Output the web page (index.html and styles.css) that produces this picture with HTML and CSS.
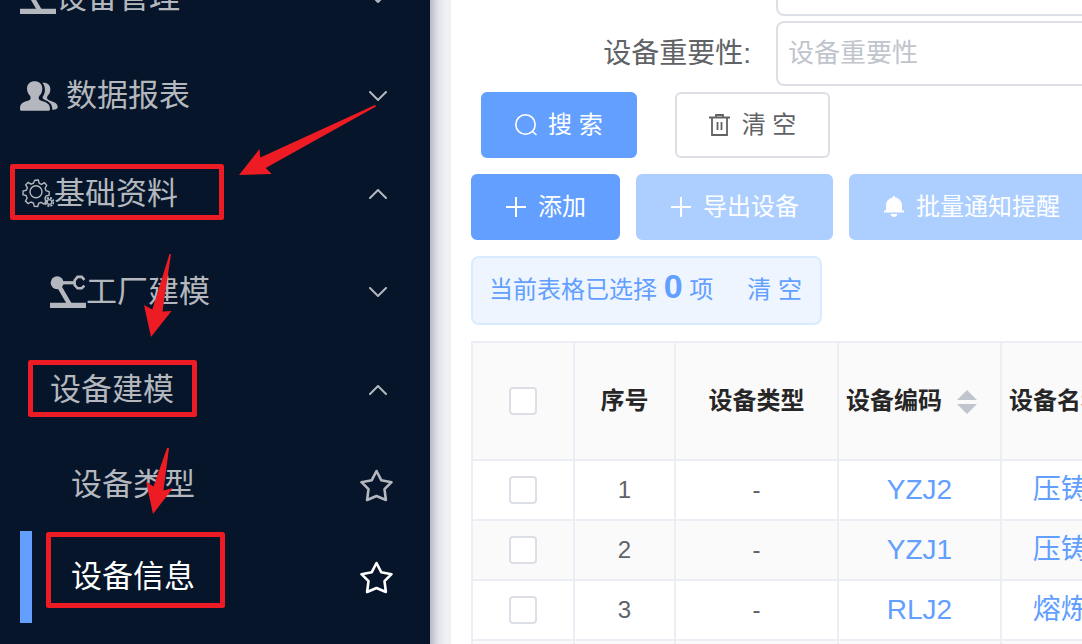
FILE: index.html
```html
<!DOCTYPE html>
<html lang="zh-CN">
<head>
    <meta charset="UTF-8">
    <meta name="viewport" content="width=device-width, initial-scale=1.0">
    <title>设备信息</title>
    <link rel="stylesheet" href="styles.css">
</head>
<body>
    <!-- 公用图标 -->
    <svg class="sprite" aria-hidden="true">
        <symbol id="robot" viewBox="0 0 111 101">
            <circle cx="22" cy="22" r="20" fill="currentColor"/>
            <path d="M0 84h111v16H0z" fill="currentColor"/>
            <path d="M30 36l30 52" fill="none" stroke="currentColor" stroke-width="14"/>
            <path d="M38 22h38" fill="none" stroke="currentColor" stroke-width="10"/>
            <path d="M106 13l-8-9H85l-9 11v14l9 10h13l8-8" fill="none" stroke="currentColor" stroke-width="8"/>
        </symbol>
        <symbol id="down" viewBox="0 0 18 10">
            <path d="M1 1l8 8 8-8" fill="none" stroke="currentColor" stroke-width="2" stroke-linecap="round"/>
        </symbol>
        <symbol id="up" viewBox="0 0 18 10">
            <path d="M1 9l8-8 8 8" fill="none" stroke="currentColor" stroke-width="2" stroke-linecap="round"/>
        </symbol>
        <symbol id="star" viewBox="0 0 33 33">
            <path d="M16.500 2l4.700 9.200 10.300 2-7 7 1.400 10.800-9.400-4-9.400 4 1.400-10.800-7-7 10.300-2z" fill="none" stroke="currentColor" stroke-width="2.600" stroke-linejoin="round"/>
        </symbol>
        <symbol id="plus" viewBox="0 0 24 24">
            <path d="M11 2v20M1 12h20" fill="none" stroke="currentColor" stroke-width="2"/>
        </symbol>
    </svg>

    <nav class="sidebar">
        <ul class="menu">
            <li><button class="menu-item"><svg class="menu-icon"><use href="#robot"/></svg>设备管理<svg class="chevron"><use href="#down"/></svg></button></li>
            <li>
                <button class="menu-item">
                    <svg class="menu-icon users" viewBox="0 0 114 89" fill="currentColor">
                        <path d="M0 84C0 68 6 64 24 59c8-3 10-7 6-15-6-6-9-14-9-22C21 8 31 0 44 0s23 8 23 22c0 9-3 17-9 22-4 8-2 12 6 15 18 5 26 11 26 25 0 3-3 5-6 5H6c-3 0-6-2-6-5z"/>
                        <path d="M67 5c13-2 24 5 24 19 0 9-3 15-8 20-4 8-1 11 6 14 17 6 24 10 24 20 0 4-3 6-16 8 0-16-7-24-25-31-6-4-5-7-2-11 6-8 8-28-3-39z"/>
                    </svg>数据报表<svg class="chevron"><use href="#down"/></svg>
                </button>
            </li>
            <li>
                <button class="menu-item">
                    <svg class="menu-icon gear" viewBox="-3 1 34 34" fill="none" stroke="currentColor">
                        <path d="M11.800 4.300l3.500-.3.900 3.300 2.300 1.100 2.900-1.700 2.300 2.600-1.600 2.900 1 2.500 3.100 1-.1 3.600-3.100.8-1.100 2.500 1.500 3-2.500 2.400-2.800-1.700-2.400 1-1 3.200-3.400-.1-.9-3.300-2.300-1.100-2.900 1.600L2.500 25l1.600-2.900-1-2.500L0 18.700l.1-3.600 3.200-.9 1.100-2.400-1.700-3 2.500-2.400L8 8.100l2.400-1z" stroke-width="1.400"/>
                        <circle cx="13" cy="15.800" r="6" stroke-width="1.400"/>
                        <circle cx="26.500" cy="26" r="4" stroke-width="2" stroke-dasharray="2 1.140"/>
                        <circle cx="26.500" cy="26" r="2.300" stroke-width="1.200"/>
                    </svg>基础资料<svg class="chevron"><use href="#up"/></svg>
                </button>
                <ul class="submenu">
                    <li><button class="menu-item level-2"><svg class="menu-icon"><use href="#robot"/></svg>工厂建模<svg class="chevron"><use href="#down"/></svg></button></li>
                    <li>
                        <button class="menu-item level-2">设备建模<svg class="chevron"><use href="#up"/></svg></button>
                        <ul class="submenu">
                            <li><a href="#" class="menu-link">设备类型<svg class="star"><use href="#star"/></svg></a></li>
                            <li><a href="#" class="menu-link active">设备信息<svg class="star"><use href="#star"/></svg></a></li>
                        </ul>
                    </li>
                </ul>
            </li>
        </ul>
    </nav>

    <main class="page">
        <div class="content">
            <form class="search-form">
                <div class="form-item">
                    <label for="level"></label>
                    <input type="text" id="level">
                </div>
                <div class="form-item">
                    <label for="importance">设备重要性:</label>
                    <input type="text" id="importance" placeholder="设备重要性">
                </div>
            </form>

            <div class="search-actions">
                <button class="btn primary">
                    <svg class="btn-icon" viewBox="0 0 24 24" fill="none" stroke="currentColor" stroke-width="1.600"><circle cx="10.500" cy="11.500" r="9.700"/><path d="M17 18l4.500 4"/></svg>
                    搜 索
                </button>
                <button class="btn">
                    <svg class="btn-icon" viewBox="0 0 24 24" fill="none" stroke="currentColor" stroke-width="1.800"><path d="M0 4.500h21M3 4.500V22h15V4.500M7 4.500V2h7v2.500M8.500 9v8M12.500 9v8"/></svg>
                    清 空
                </button>
            </div>

            <div class="toolbar">
                <button class="btn primary"><svg class="btn-icon"><use href="#plus"/></svg>添加</button>
                <button class="btn primary" disabled><svg class="btn-icon"><use href="#plus"/></svg>导出设备</button>
                <button class="btn primary" disabled>
                    <svg class="btn-icon" viewBox="1 0 24 24" fill="currentColor"><path d="M11 2.500V1h2v1.500c4.300.5 7 4 7 8v5h2v2H2v-2h2v-5c0-4 2.700-7.500 7-8zM8.500 19h7c-.4 1.900-1.700 3-3.500 3s-3.100-1.100-3.500-3z"/></svg>
                    批量通知提醒
                </button>
            </div>

            <div class="selection">
                <span>当前表格已选择 <b>0</b> 项</span>
                <button class="clear">清 空</button>
            </div>

            <table class="devices">
                <colgroup>
                    <col class="col-check">
                    <col class="col-index">
                    <col class="col-data">
                    <col class="col-data">
                    <col class="col-data">
                </colgroup>
                <thead>
                    <tr>
                        <th><input type="checkbox" aria-label="全选"></th>
                        <th>序号</th>
                        <th>设备类型</th>
                        <th class="sortable">设备编码<svg class="sort" viewBox="0 0 22 26"><path d="M1 11L11 1l10 10zM1 15h20L11 25z"/></svg></th>
                        <th class="sortable">设备名称<svg class="sort" viewBox="0 0 22 26"><path d="M1 11L11 1l10 10zM1 15h20L11 25z"/></svg></th>
                    </tr>
                </thead>
                <tbody>
                    <tr>
                        <td><input type="checkbox" aria-label="选择 1"></td>
                        <td>1</td>
                        <td>-</td>
                        <td><a href="#">YZJ2</a></td>
                        <td><a href="#">压铸机2</a></td>
                    </tr>
                    <tr>
                        <td><input type="checkbox" aria-label="选择 2"></td>
                        <td>2</td>
                        <td>-</td>
                        <td><a href="#">YZJ1</a></td>
                        <td><a href="#">压铸机1</a></td>
                    </tr>
                    <tr>
                        <td><input type="checkbox" aria-label="选择 3"></td>
                        <td>3</td>
                        <td>-</td>
                        <td><a href="#">RLJ2</a></td>
                        <td><a href="#">熔炼机2</a></td>
                    </tr>
                    <tr>
                        <td></td>
                        <td></td>
                        <td></td>
                        <td></td>
                        <td></td>
                    </tr>
                </tbody>
            </table>
        </div>
    </main>

    <!-- 操作指引标注 -->
    <svg class="guide" width="430" height="644" viewBox="0 0 430 644" aria-hidden="true">
        <g fill="none" stroke="#ed1c24" stroke-width="5" stroke-linejoin="round">
            <rect x="12.500" y="166.500" width="209" height="51"/>
            <rect x="30.500" y="362.500" width="164" height="52"/>
            <rect x="48.500" y="534.500" width="174" height="71"/>
        </g>
        <g fill="#ed1c24">
            <path d="M239 175l20.500-26 .8 8.500L375 105l1 1.500L265.700 168l6 6z"/>
            <path d="M169.500 254h1.500l-8.500 57.500 9-.5L151 337l-7-32 8.300 4.500z"/>
            <path d="M167 448h2l-5.500 42.500 9.500-2.500-20 26-7-32.500 7.500 5z"/>
        </g>
    </svg>
</body>
</html>
```
FILE: styles.css
```css
* {
    box-sizing: border-box;
}
body {
    font-family: "Liberation Sans", "Noto Sans CJK SC", sans-serif;
    font-size: 24px;
    line-height: 1.2;
    color: #606266;
    margin: 0;
    height: 100vh;
    display: flex;
    overflow: hidden;
    position: relative;
}
button, input {
    font-family: inherit;
    font-size: inherit;
    line-height: inherit;
    color: inherit;
}
button {
    cursor: pointer;
}
ul {
    list-style-type: none;
    margin: 0;
    padding: 0;
}
a {
    text-decoration: none;
}
.sprite {
    display: none;
}

/* 左侧菜单 */
.sidebar {
    background-color: #061529;
    color: #b4b8be;
    width: 430px;
    flex-shrink: 0;
    overflow: hidden;
}
.menu {
    margin-top: -51px;
}
.menu-item, .menu-link {
    display: flex;
    align-items: center;
    width: 100%;
    font-size: 31px;
    white-space: nowrap;
}
.menu-item {
    height: 98px;
    padding: 0 43px 0 20px;
    background: none;
    border: none;
}
.level-2 {
    padding-left: 50px;
}
.menu-link {
    height: 92px;
    color: inherit;
    padding: 0 37px 0 39px;
    border-left: 12px solid transparent;
    margin-left: 20px;
    width: auto;
}
.menu-link.active {
    color: white;
    border-left-color: #629fff;
}
.menu-icon {
    width: 36px;
    height: 34px;
}
.users {
    width: 38px;
    height: 30px;
    margin-right: 8px;
}
.gear {
    width: 34px;
}
.chevron {
    width: 18px;
    height: 10px;
    margin-left: auto;
}
.star {
    width: 33px;
    height: 33px;
    margin-left: auto;
}

/* 右侧内容 */
.page {
    flex: 1;
    min-width: 0;
    padding-left: 21px;
    background: linear-gradient(to right, #b7bac3, #e0e2e7 8px, #eff1f5 16px);
}
.content {
    background-color: white;
    height: 100%;
    padding-left: 20px;
    overflow: hidden;
}
.search-form {
    display: flex;
    flex-direction: column;
    gap: 5px;
    margin-top: -49px;
}
.form-item {
    display: flex;
    align-items: center;
}
.form-item label {
    width: 305px;
    flex-shrink: 0;
    padding-right: 25px;
    text-align: right;
    font-size: 28px;
}
.form-item input {
    flex: 1;
    min-width: 400px;
    height: 65px;
    padding: 0 10px;
    font-size: 26px;
    border: 2px solid #dcdfe6;
    border-radius: 8px;
}
.form-item input::placeholder {
    color: #c0c4cc;
}
.search-actions {
    display: flex;
    gap: 38px;
    padding: 6px 10px 16px;
}
.toolbar {
    display: flex;
    gap: 16px;
}
.btn {
    display: flex;
    align-items: center;
    gap: 9px;
    flex-shrink: 0;
    height: 66px;
    padding: 0 32px;
    background-color: white;
    border: 2px solid #dcdfe6;
    border-radius: 6px;
    white-space: nowrap;
}
.btn.primary {
    background-color: #629fff;
    border-color: #629fff;
    color: white;
}
.btn.primary:disabled {
    background-color: #adcfff;
    border-color: #adcfff;
    cursor: not-allowed;
}
.btn-icon {
    width: 24px;
    height: 24px;
}
.selection {
    display: flex;
    align-items: center;
    gap: 34px;
    width: fit-content;
    height: 69px;
    margin: 16px 0;
    padding: 0 18px 0 16px;
    background-color: #eef5ff;
    border: 2px solid #d9ebff;
    border-radius: 8px;
    color: #629fff;
    white-space: nowrap;
}
.selection b {
    font-size: 34px;
    line-height: 0;
}
.clear {
    padding: 0;
    background: none;
    border: none;
}

/* 设备表格 */
.devices {
    table-layout: fixed;
    width: 692px;
    border-collapse: collapse;
    text-align: center;
}
.col-check {
    width: 102px;
}
.col-index {
    width: 101px;
}
.col-data {
    width: 163px;
}
.devices th, .devices td {
    height: 60px;
    padding: 0;
    border: 2px solid #ebeef5;
    white-space: nowrap;
}
.devices th {
    height: 118px;
    background-color: #fafafa;
    color: #262626;
}
.devices th.sortable {
    padding-left: 7px;
    text-align: left;
}
.devices tbody tr:nth-child(even) {
    background-color: #fafafa;
}
.devices a {
    color: #629fff;
    font-size: 28px;
}
.devices input {
    appearance: none;
    display: block;
    width: 28px;
    height: 28px;
    margin: 0 auto;
    background-color: white;
    border: 2px solid #dcdfe6;
    border-radius: 4px;
}
.sort {
    width: 22px;
    height: 26px;
    margin-left: 14px;
    vertical-align: middle;
    fill: #c0c4cc;
}

.guide {
    position: absolute;
    top: 0;
    left: 0;
    pointer-events: none;
}
```
